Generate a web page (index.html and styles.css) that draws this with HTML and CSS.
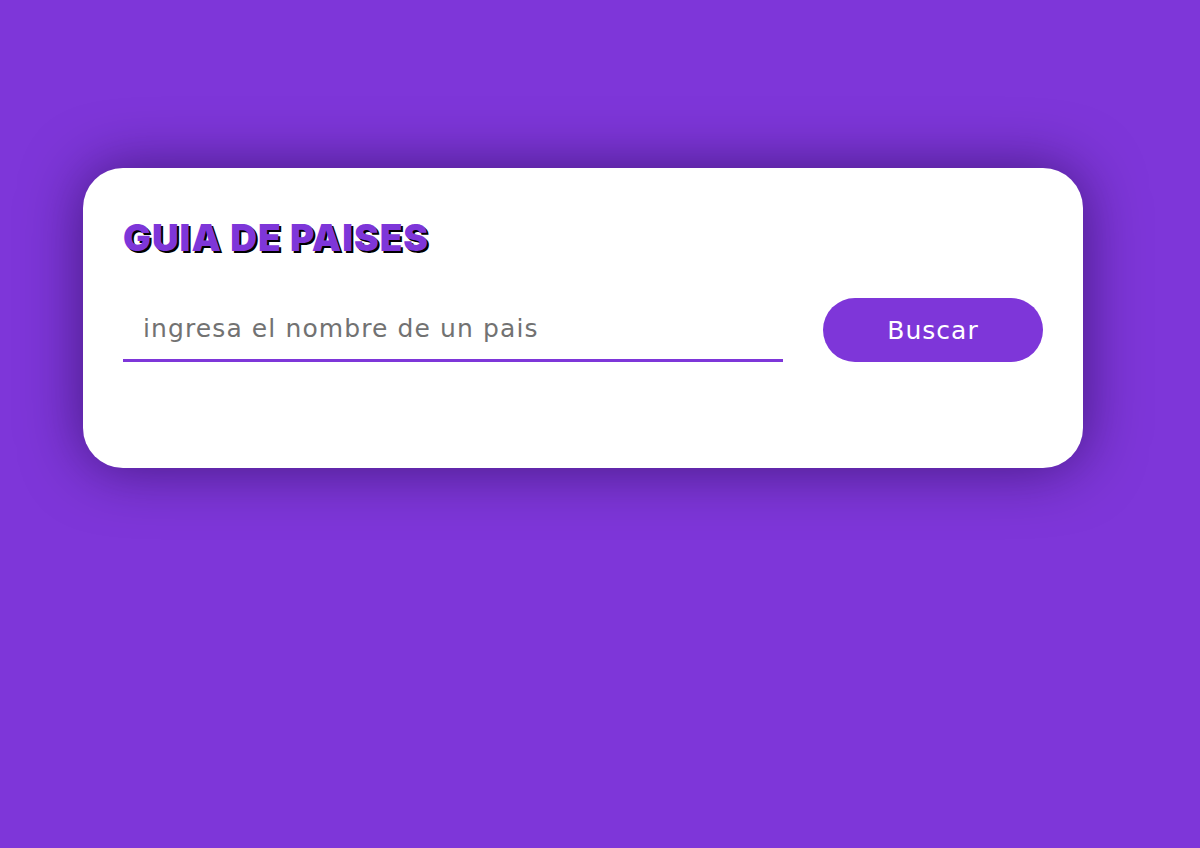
FILE: index.html
```html
<!DOCTYPE html>
<html lang="es">
<head>
<meta charset="utf-8">
<title>Guia de paises</title>
<link rel="stylesheet" href="styles.css">
</head>
<body>
<main class="page">
  <section class="card">
    <h1 class="title">GUIA DE PAISES</h1>
    <form class="search">
      <input class="search-input" type="text" placeholder="ingresa el nombre de un pais">
      <button class="search-btn" type="button">Buscar</button>
    </form>
  </section>
</main>
</body>
</html>
```
FILE: styles.css
```css
html, body {
  margin: 0;
  height: 100%;
}
body {
  background: #7e36d9;
  font-family: "DejaVu Sans", "Liberation Sans", sans-serif;
}
.page {
  padding: 168px 0 0 83px;
}
.card {
  box-sizing: border-box;
  width: 1000px;
  height: 300px;
  background: #fff;
  border-radius: 40px;
  padding: 47px 40px 40px;
  box-shadow: 0 0 60px rgba(20, 0, 50, 0.55);
}
.title {
  margin: 0;
  font-family: "Inter", sans-serif;
  font-weight: 900;
  font-size: 37px;
  line-height: 46px;
  letter-spacing: 1px;
  color: #7e36d9;
  text-shadow: 2px 2px 0 #000;
}
.search {
  display: flex;
  align-items: flex-end;
  gap: 40px;
  margin-top: 37px;
}
.search-input {
  box-sizing: border-box;
  width: 660px;
  height: 64px;
  border: none;
  border-bottom: 3px solid #7e36d9;
  padding: 0 20px;
  font-family: "DejaVu Sans", sans-serif;
  font-size: 25px;
  letter-spacing: 1.1px;
  outline: none;
  background: transparent;
}
.search-input::placeholder {
  color: #727272;
}
.search-btn {
  width: 220px;
  height: 64px;
  border: none;
  border-radius: 32px;
  background: #7e36d9;
  color: #fff;
  font-family: "DejaVu Sans", sans-serif;
  font-size: 25px;
  letter-spacing: 1px;
  cursor: pointer;
}
```
